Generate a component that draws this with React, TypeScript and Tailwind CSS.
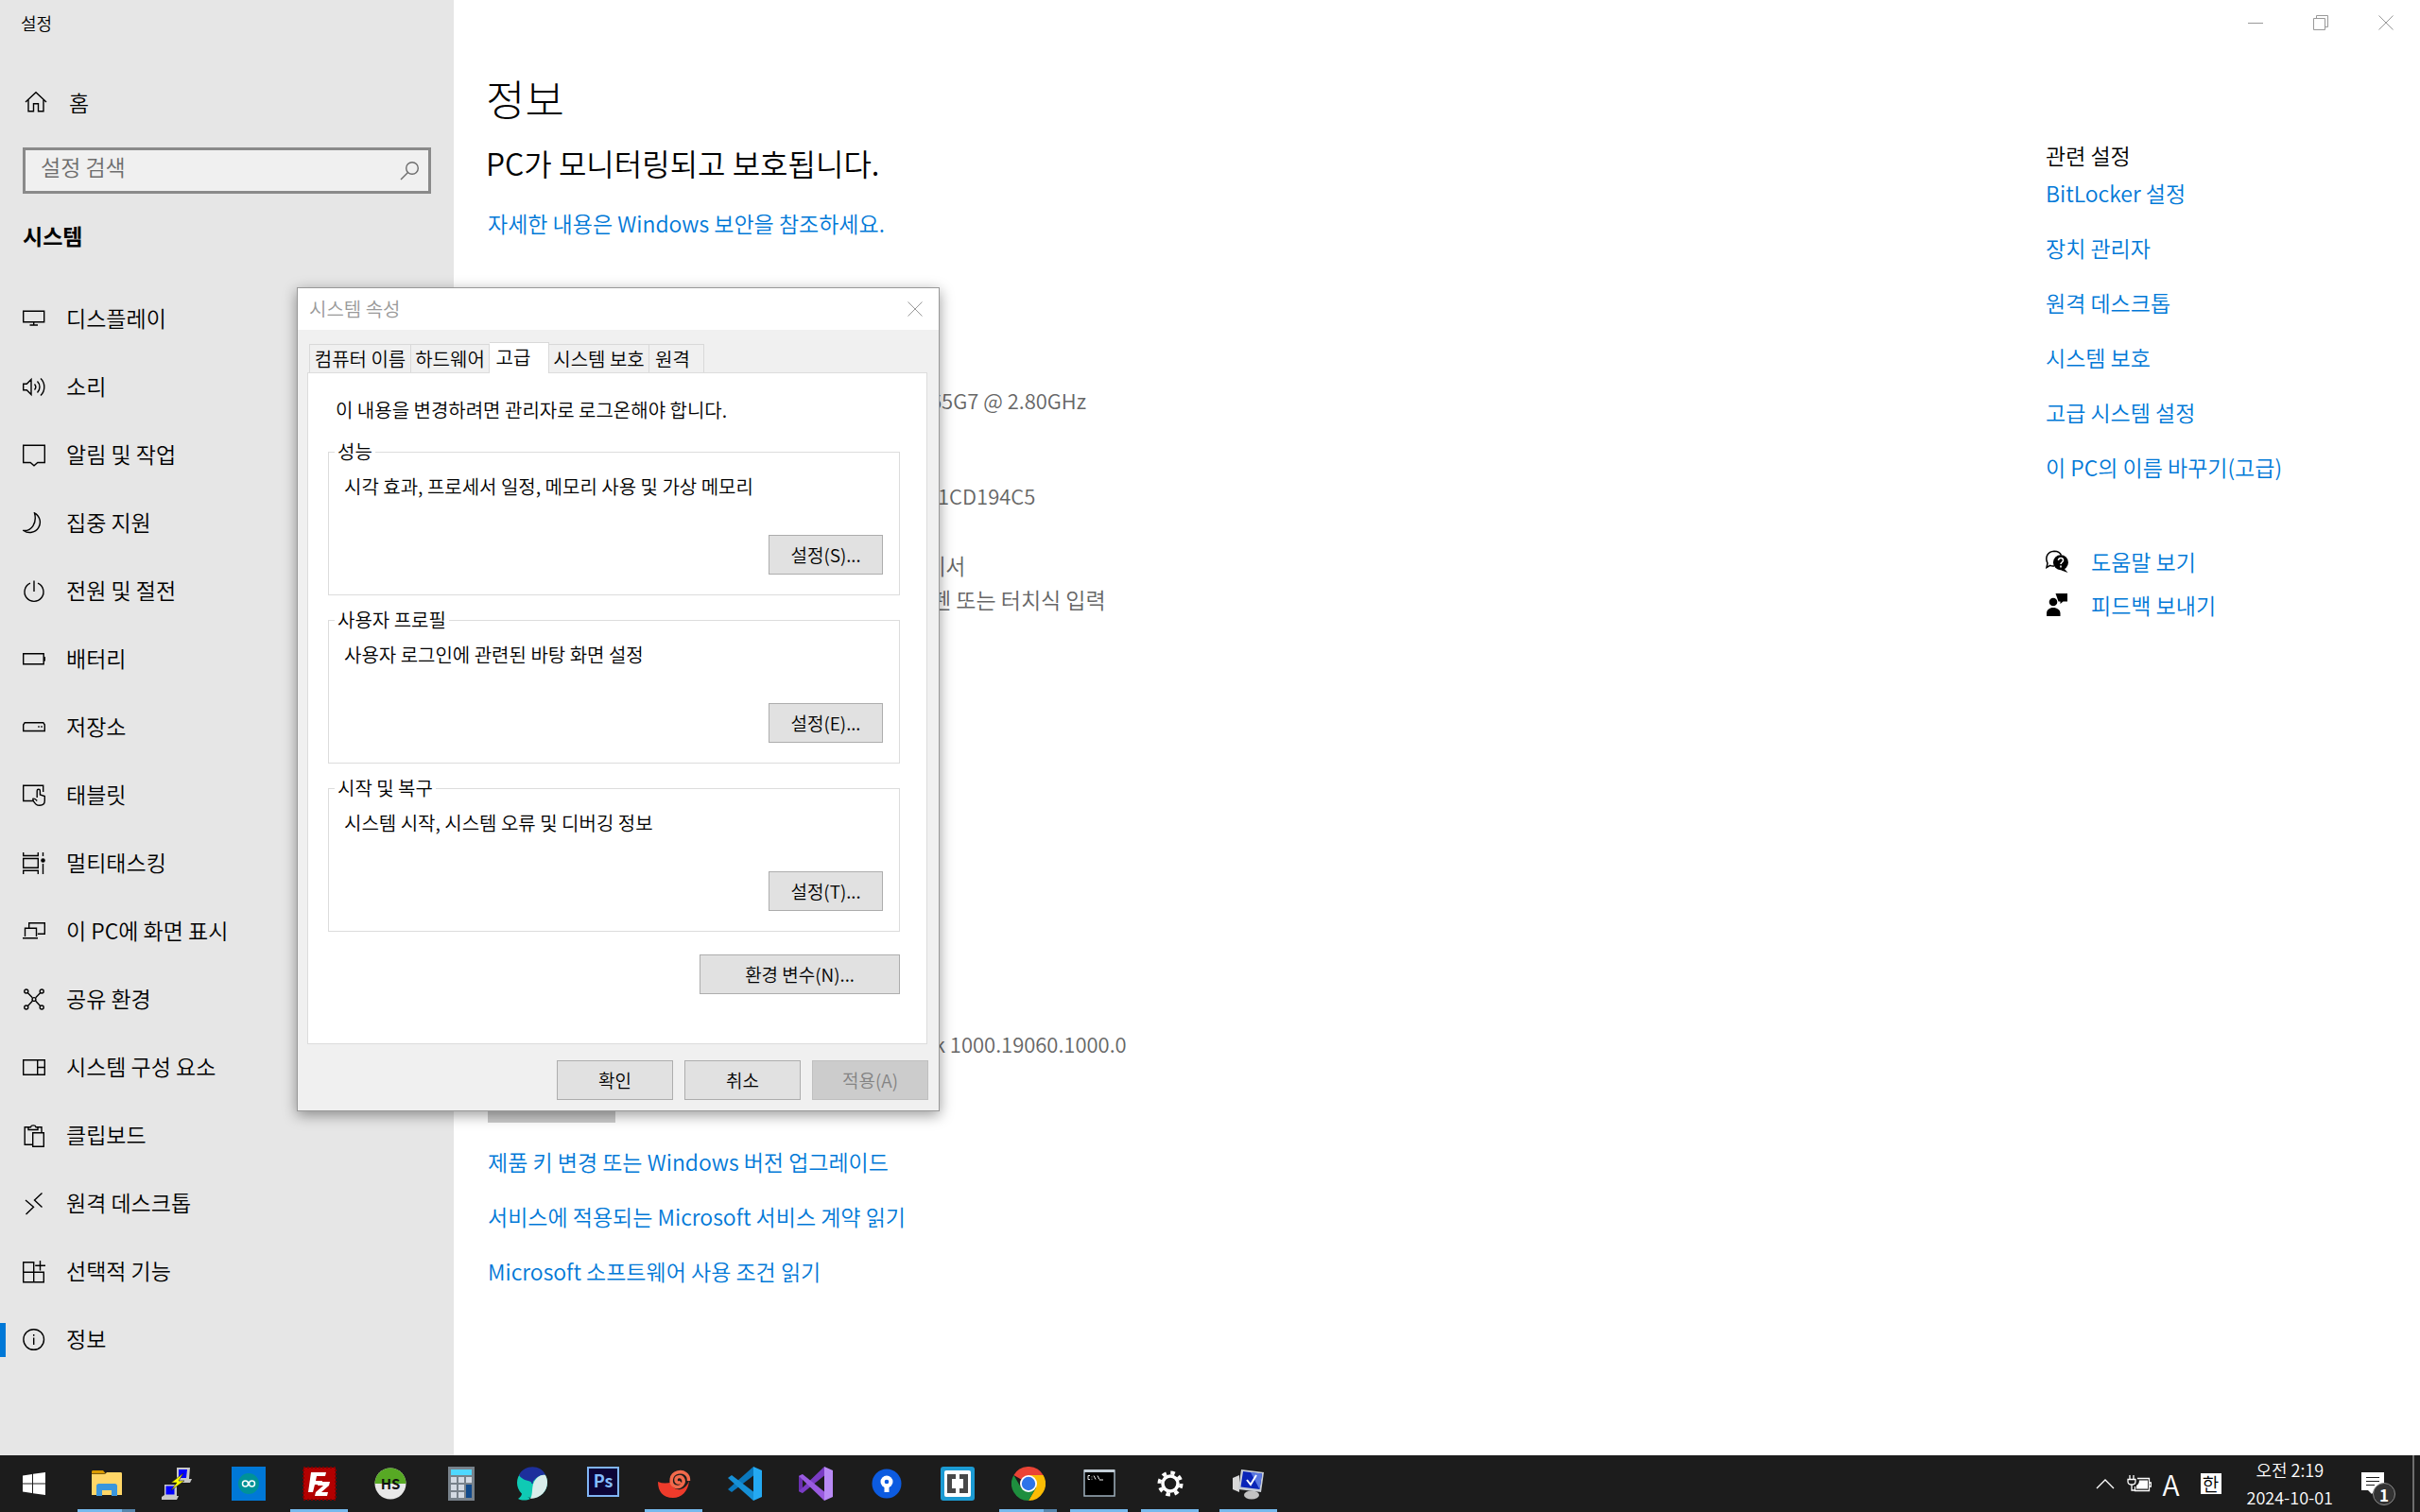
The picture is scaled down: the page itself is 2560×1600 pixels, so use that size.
import type { ReactNode } from "react";

type NavItem = { label: string; icon: ReactNode; active?: boolean };

function LineIcon({ children }: { children: ReactNode }) {
  return (
    <svg viewBox="0 0 24 24" className="h-6 w-6 shrink-0" fill="none" stroke="#000" strokeWidth="1.4">
      {children}
    </svg>
  );
}

const navItems: NavItem[] = [
  {
    label: "디스플레이",
    icon: <path d="M.7 3.2h22v11.6H.7zM11.7 15v3M7.5 18H16" />,
  },
  {
    label: "소리",
    icon: (
      <path d="M.7 8.2h3.6L9 3.4v16.2l-4.7-4.8H.7zM12.5 8.5a4.5 4.5 0 0 1 0 6M15.5 5.5a8.5 8.5 0 0 1 0 12M19 2.5a12.5 12.5 0 0 1 0 18" />
    ),
  },
  {
    label: "알림 및 작업",
    icon: <path d="M.7 1.2h22.6v18.3h-7.5L12 22.8l-3.8-3.3H.7z" />,
  },
  {
    label: "집중 지원",
    icon: <path d="M12.5.8a11 11 0 1 1-11.5 18.7C9 20 15.5 12 12.5.8z" />,
  },
  {
    label: "전원 및 절전",
    icon: <path d="M12 .5V12M8 3.2a10 10 0 1 0 8 0" />,
  },
  {
    label: "배터리",
    icon: <path d="M.7 5.7h21.5v11H.7zM23.3 9v4.5" />,
  },
  {
    label: "저장소",
    icon: <path d="M2.2 6.7h19.6L23.3 9v6.5H.7V9zM16.2 11h1.6M19.2 11h1.6" />,
  },
  {
    label: "태블릿",
    icon: (
      <path d="M11 17.5H.7V1.2h21V8M15.2 14V6.800a1.600 1.600 0 0 1 3.200 0V11l4.900 1.500v4.800c0 3-2 5-5.300 5-3.500 0-4.500-1.500-6.700-4.600l-.5-2.400c1.600-.6 3 .2 4.400 2.200" />
    ),
  },
  {
    label: "멀티태스킹",
    icon: (
      <>
        <path d="M.7 0v3.5h15.6V0M.7 6.5h15.6v9.800H.7zM.7 23v-3.700h15.600V23M21.5 0v4M21.5 12v11" />
        <circle cx="21.5" cy="8.5" r="1.6" fill="#000" />
      </>
    ),
  },
  {
    label: "이 PC에 화면 표시",
    icon: <path d="M6.7 8V2.700h16.600v11.600h-7.500M2.5 17V8.200h12V17M0 18.800h16" />,
  },
  {
    label: "공유 환경",
    icon: (
      <>
        <path d="M5 4.2l5.300 5.500M19 4.200l-5.300 5.500M5 19l5.300-5.700M19 19l-5.300-5.700" />
        <circle cx="12" cy="11.5" r="1.9" />
        <circle cx="3.800" cy="3" r="2" />
        <circle cx="20.200" cy="3" r="2" />
        <circle cx="3.800" cy="20" r="2" />
        <circle cx="20.200" cy="20" r="2" />
      </>
    ),
  },
  {
    label: "시스템 구성 요소",
    icon: <path d="M.7 3.7h22.6v15.6H.7zM15.7 3.7v15.6M15.7 11.5h7.6" />,
  },
  {
    label: "클립보드",
    icon: <path d="M10 21.3H2.2V2.7h3.5M16 2.7h4v6M6 5.5V2.7h2.5c.5-2.500 5-2.500 5.500 0H16v2.800zM10.700 8.700h11.600v14.500H10.700z" />,
  },
  {
    label: "원격 데스크톱",
    icon: <path d="M3 8l8.500 7.300L3.500 23M20.500.5l-8 7.500 8 7.500" />,
  },
  {
    label: "선택적 기능",
    icon: <path d="M.7 1.7h11v21H.7zM.7 12.2h21.600v10.500h-11M18.500 0v10.500M13.200 5.200H24" />,
  },
  {
    label: "정보",
    active: true,
    icon: (
      <>
        <circle cx="11.700" cy="11.500" r="10.800" />
        <path d="M11.700 9.500V17M11.700 6v1.700" />
      </>
    ),
  },
];

const relatedLinks = [
  "BitLocker 설정",
  "장치 관리자",
  "원격 데스크톱",
  "시스템 보호",
  "고급 시스템 설정",
  "이 PC의 이름 바꾸기(고급)",
];

const productLinks = [
  "제품 키 변경 또는 Windows 버전 업그레이드",
  "서비스에 적용되는 Microsoft 서비스 계약 읽기",
  "Microsoft 소프트웨어 사용 조건 읽기",
];

const groups = [
  { title: "성능", text: "시각 효과, 프로세서 일정, 메모리 사용 및 가상 메모리", button: "설정(S)..." },
  { title: "사용자 프로필", text: "사용자 로그인에 관련된 바탕 화면 설정", button: "설정(E)..." },
  { title: "시작 및 복구", text: "시스템 시작, 시스템 오류 및 디버깅 정보", button: "설정(T)..." },
];

function Sidebar() {
  return (
    <aside className="w-[480px] shrink-0 bg-[#e6e6e6]">
      <div className="flex h-12 items-center pl-[22px] text-[18px]">설정</div>

      <button type="button" className="mt-6 flex h-[72px] w-full items-center gap-[23px] pl-[26px]">
        <LineIcon>
          <path d="M1 12L12 1.7 23 12M4 9.800v12h5.500v-8h5v8H20v-12" />
        </LineIcon>
        홈
      </button>

      <div className="mx-6 mt-3 flex h-[49px] items-center border-[3px] border-[#8a8a8a] bg-[#f0f0f0] pr-2">
        <input
          type="text"
          aria-label="설정 검색"
          placeholder="설정 검색"
          className="min-w-0 flex-1 bg-transparent pb-2 pl-4 outline-none placeholder:text-[#6d6d6d]"
        />
        <svg viewBox="0 0 24 24" className="h-6 w-6" fill="none" stroke="#6d6d6d" strokeWidth="1.4">
          <circle cx="15" cy="9" r="6.3" />
          <path d="M10.500 13.500L3 21" />
        </svg>
      </div>

      <h2 className="mt-5 mb-[29px] flex h-12 items-center pl-6 font-bold">시스템</h2>

      <nav>
        {navItems.map((item) => (
          <a key={item.label} href="#" className="flex h-[72px] items-center">
            <span className={item.active ? "h-9 w-1.5 bg-[#0078d7]" : "h-9 w-1.5"} />
            <span className="pr-[22px] pl-[18px]">
              <LineIcon>{item.icon}</LineIcon>
            </span>
            <span className="pb-[3px]">{item.label}</span>
          </a>
        ))}
      </nav>
    </aside>
  );
}

function WindowControls() {
  return (
    <header className="flex h-12 items-center justify-end pr-0.5">
      <button type="button" aria-label="최소화" className="flex h-12 w-[69px] items-center justify-center">
        <svg viewBox="0 0 16 16" className="h-4 w-4" stroke="#999" fill="none">
          <path d="M0 8.500h16" />
        </svg>
      </button>
      <button type="button" aria-label="이전 크기로" className="flex h-12 w-[69px] items-center justify-center">
        <svg viewBox="0 0 16 16" className="h-4 w-4" stroke="#999" fill="none">
          <path d="M.5 3.500h12v12H.5zM3.500 3.500v-3h12v12h-3" />
        </svg>
      </button>
      <button type="button" aria-label="닫기" className="flex h-12 w-[69px] items-center justify-center">
        <svg viewBox="0 0 16 16" className="h-4 w-4" stroke="#999" fill="none">
          <path d="M.5.5l15 15M15.500.5l-15 15" />
        </svg>
      </button>
    </header>
  );
}

function Content() {
  return (
    <div className="min-w-0 flex-1 pl-[34px]">
      <h1 className="mt-[26px] text-[45px] leading-[60px] font-light">정보</h1>
      <h2 className="mt-[15px] text-[32px] leading-[46px]">PC가 모니터링되고 보호됩니다.</h2>

      <div className="pl-0.5">
        <a href="#" className="mt-[23px] block leading-9 text-[#0078d7]">
          자세한 내용은 Windows 보안을 참조하세요.
        </a>

        <div className="mt-[151px] leading-9 text-[#666]">
          <p className="pl-[468px] text-[22px]">65G7 @ 2.80GHz</p>
          <p className="mt-[65px] pl-[476px] text-[22px]">1CD194C5</p>
          <p className="mt-[38px] pl-[463px]">세서</p>
          <p className="pl-[469px]">펜 또는 터치식 입력</p>
          <p className="mt-[434px] pl-[472px] text-[22px]">k 1000.19060.1000.0</p>
        </div>

        <button type="button" className="mt-[13px] block h-[53px] w-[135px] bg-[#ccc]">
          복사
        </button>

        <ul className="mt-[23px] flex flex-col gap-[22px] leading-9 text-[#0078d7]">
          {productLinks.map((label) => (
            <li key={label}>
              <a href="#">{label}</a>
            </li>
          ))}
        </ul>
      </div>
    </div>
  );
}

function Related() {
  return (
    <aside className="w-[396px] shrink-0 pt-[98px] leading-9">
      <h3>관련 설정</h3>
      <ul className="mt-1 flex flex-col gap-[22px] text-[#0078d7]">
        {relatedLinks.map((label) => (
          <li key={label}>
            <a href="#">{label}</a>
          </li>
        ))}
      </ul>

      <div className="mt-16 flex flex-col gap-[10px] text-[#0078d7]">
        <a href="#" className="flex items-center gap-6">
          <svg viewBox="0 0 24 24" className="h-6 w-6">
            <path
              d="M9 17c-2 .3-3.200 0-4.200-.6L1 18.500l1-4.500C-1 8 2 1.500 9 1.200c4 0 6.500 1.800 7.500 4.300"
              fill="none"
              stroke="#000"
              strokeWidth="1.5"
            />
            <path d="M16 5.200a8 8 0 1 1-.1 16 8 8 0 0 1 .1-16zM19 19l4.500 5-7-2.500z" fill="#000" />
            <path d="M13.500 11c0-3.500 5.200-3.200 5 0 0 2-2.500 2-2.500 4M16 16.500v2" fill="none" stroke="#fff" strokeWidth="1.6" />
          </svg>
          도움말 보기
        </a>
        <a href="#" className="flex items-center gap-6">
          <svg viewBox="0 0 24 24" className="h-6 w-6">
            <path d="M10.500 0H23v8.500h-4.500L15.500 11V8.500h-2z" />
            <circle cx="8" cy="9" r="4.3" />
            <path d="M1 24v-3c0-3.500 3-6 7-6s7.500 2.500 7.500 6v3z" />
          </svg>
          피드백 보내기
        </a>
      </div>
    </aside>
  );
}

function DialogButton({ label, size, disabled }: { label: string; size: string; disabled?: boolean }) {
  return (
    <button
      type="button"
      disabled={disabled}
      className={`h-[42px] border border-[#adadad] bg-[#e1e1e1] text-[19px] disabled:border-[#bfbfbf] disabled:bg-[#ccc] disabled:text-[#838383] ${size}`}
    >
      {label}
    </button>
  );
}

function SystemProperties() {
  const tab = "h-[30px] border-t border-r border-[#d9d9d9]";

  return (
    <div
      role="dialog"
      aria-label="시스템 속성"
      className="absolute top-[304px] left-[314px] w-[680px] border border-[#999] bg-[#f0f0f0] text-[20px] leading-6 shadow-[0_4px_14px_rgba(0,0,0,0.4)]"
    >
      <div className="flex h-11 items-center justify-between bg-white pr-[17px] pl-3 text-[#999]">
        시스템 속성
        <button type="button" aria-label="닫기">
          <svg viewBox="0 0 16 16" className="h-4 w-4" stroke="#999" fill="none">
            <path d="M.5.5l15 15M15.500.5l-15 15" />
          </svg>
        </button>
      </div>

      <div className="pr-3 pb-[11px] pl-[10px]">
        <div role="tablist" className="mt-[13px] flex items-end pl-0.5">
          <button type="button" role="tab" className={`w-[108px] border-l ${tab}`}>
            컴퓨터 이름
          </button>
          <button type="button" role="tab" className={`w-[83px] ${tab}`}>
            하드웨어
          </button>
          <button
            type="button"
            role="tab"
            aria-selected="true"
            className="-mb-px h-[33px] w-[63px] border-t border-r border-[#d9d9d9] bg-white pr-3 pb-0.5"
          >
            고급
          </button>
          <button type="button" role="tab" className={`w-[106px] ${tab}`}>
            시스템 보호
          </button>
          <button type="button" role="tab" className={`w-[58px] pr-2 ${tab}`}>
            원격
          </button>
        </div>

        <div role="tabpanel" className="border border-[#dcdcdc] bg-white pt-[27px] pr-7 pb-[52px] pl-[21px]">
          <p className="pl-2">이 내용을 변경하려면 관리자로 로그온해야 합니다.</p>

          <div className="mt-5 flex flex-col gap-[14px]">
            {groups.map((group) => (
              <fieldset key={group.title} className="border border-[#dcdcdc]">
                <legend className="ml-1.5 px-[3px]">{group.title}</legend>
                <p className="mt-[13px] pl-4">{group.text}</p>
                <div className="mt-[39px] mr-[17px] mb-[21px] flex justify-end">
                  <DialogButton label={group.button} size="w-[121px]" />
                </div>
              </fieldset>
            ))}
          </div>

          <div className="mt-6 flex justify-end">
            <DialogButton label="환경 변수(N)..." size="w-[212px]" />
          </div>
        </div>

        <div className="-mr-px mt-[17px] flex justify-end gap-3">
          <DialogButton label="확인" size="w-[123px]" />
          <DialogButton label="취소" size="w-[123px]" />
          <DialogButton label="적용(A)" size="w-[123px]" disabled />
        </div>
      </div>
    </div>
  );
}

type TaskbarApp = { name: string; running?: boolean; stacked?: boolean; spaced?: boolean; art: ReactNode };

const apps: TaskbarApp[] = [
  {
    name: "파일 탐색기",
    running: true,
    stacked: true,
    art: (
      <>
        <path d="M2 5.500c0-1 .5-1.500 1.500-1.500H14l3 3.500H2z" fill="#d99a00" />
        <path d="M2 8h14l2-2h14.500c1 0 1.500.5 1.500 1.500V30H2z" fill="#ffd667" />
        <path d="M7 31V20.500C7 19 8 18 9.500 18h17c1.500 0 2.500 1 2.500 2.500V31h-6v-6H13v6z" fill="#3a96dd" />
      </>
    ),
  },
  {
    name: "PuTTY",
    art: (
      <>
        <path d="M17 1h14l-1 12h3l-2 4H16l-1-3h2z" fill="#c8c8c8" />
        <path d="M19 3h9l-1 9h-8z" fill="#00f" />
        <path d="M4 19h13v12h2l-2 4H1v-3l3-2z" fill="#c8c8c8" />
        <path d="M5.500 20.500h9v9h-9z" fill="#00f" />
        <path d="M24 7L11 17h6l-6 8 14-10h-6z" fill="#ff0" stroke="#222" strokeWidth=".6" />
      </>
    ),
  },
  {
    name: "Arduino",
    art: (
      <>
        <path d="M0 0h36v36H0z" fill="#0078d7" />
        <circle cx="18" cy="18" r="11" fill="#009298" />
        <circle cx="14.500" cy="18" r="3" fill="none" stroke="#fff" strokeWidth="1.5" />
        <circle cx="21.500" cy="18" r="3" fill="none" stroke="#fff" strokeWidth="1.5" />
      </>
    ),
  },
  {
    name: "FileZilla",
    running: true,
    art: (
      <>
        <path d="M1 1h34v34H1z" fill="#b30000" stroke="#7d0000" strokeWidth="2" strokeDasharray="2 2" />
        <path d="M9 6h16l-1 4h-9l-1 5h7l-1 4h-7l-2 8H6z" fill="#fff" />
        <path d="M17 16h12l-1 4-8 7h7l-1 4H13l1-4 8-7h-6z" fill="#fff" />
      </>
    ),
  },
  {
    name: "HeidiSQL",
    art: (
      <>
        <circle cx="18" cy="18" r="16.500" fill="#e8e8e8" />
        <path d="M1.500 18a16.500 16.500 0 0 1 33 0z" fill="#57a924" />
        <text x="18" y="23.500" textAnchor="middle" fontSize="15" fontWeight="700" fill="#111">
          HS
        </text>
      </>
    ),
  },
  {
    name: "계산기",
    art: (
      <>
        <path d="M4 0h28v36H4z" fill="#78828b" />
        <path d="M7 3h22v6H7z" fill="#4fd8ff" />
        <path
          d="M7 11h6v6H7zM15 11h6v6h-6zM23 11h6v6h-6zM7 19h6v6H7zM15 19h6v6h-6zM7 27h6v6H7zM15 27h6v6h-6z"
          fill="#d3dae3"
        />
        <path d="M23 19h6v14h-6z" fill="#114a8b" />
      </>
    ),
  },
  {
    name: "Whale",
    art: (
      <>
        <circle cx="18" cy="17" r="16" fill="#0fcab4" />
        <path d="M4 9C9-2 27-3 32 9c-6-1-10 3-14 8C14 14 8 15 4 9z" fill="#1d2f9c" />
        <path d="M32 9c6 11-2 25-16 25 3-5 1-12 4-18 3-5 7-8 12-7z" fill="#d9ecea" />
        <path d="M3 22c3 5 8 8 13 12-4 2-9 2-13 0 3-2 4-4 4-6z" fill="#0fcab4" />
        <circle cx="18" cy="17" r="1" fill="#1d2f9c" />
      </>
    ),
  },
  {
    name: "Photoshop",
    art: (
      <>
        <path d="M2 1h32v30H2z" fill="#0c0538" stroke="#80b5f5" strokeWidth="2" />
        <text x="18" y="22" textAnchor="middle" fontSize="18" fontWeight="700" fill="#84bdff">
          Ps
        </text>
      </>
    ),
  },
  {
    name: "Nautilus",
    running: true,
    art: (
      <>
        <path d="M1 16c5 2 10 2 15 0-1 6 4 9 9 8 4-1 7-4 9-9-1 11-8 18-17 18C6 33 1 26 1 16z" fill="#ee3b2b" />
        <path
          d="M33.500 15C34 8 28 4.500 22 6c-8 2-9 12-3 15 6 2 10-3 9-7-2-5-8-4-8 0 0 3 3 4 5 2"
          fill="none"
          stroke="#f2694b"
          strokeWidth="3.5"
        />
      </>
    ),
  },
  {
    name: "Visual Studio Code",
    art: (
      <>
        <path d="M27 0l9 4v28l-9 4z" fill="#24a9f2" />
        <path d="M27 9.500L4 27 0 24 27 0z" fill="#0a78bd" />
        <path d="M27 26.500L4 9 0 12l27 24z" fill="#1690d6" />
      </>
    ),
  },
  {
    name: "Visual Studio",
    art: (
      <>
        <path d="M27 0l9 4v28l-9 4z" fill="#b98af5" />
        <path d="M0 10l4-2v20l-4-2z" fill="#6a2fb0" />
        <path d="M27 9.500L4 28l-4-2L27 0z" fill="#7a3cc4" />
        <path d="M27 26.500L4 8l-4 2 27 26z" fill="#9a5be0" />
      </>
    ),
  },
  {
    name: "Sourcetree",
    art: (
      <>
        <circle cx="18" cy="18" r="15.500" fill="#0c5be0" />
        <circle cx="18" cy="16" r="6.500" fill="#fff" />
        <path d="M15.500 20h5v7h-5z" fill="#fff" />
        <circle cx="18" cy="16" r="2.300" fill="#0c5be0" />
      </>
    ),
  },
  {
    name: "Brackets",
    art: (
      <>
        <rect width="36" height="36" rx="3" fill="#1c9bd3" />
        <rect x="4" y="4" width="28" height="28" rx="2" fill="#fff" />
        <path d="M7 8h9v5h-4v10h4v5H7zM29 8h-9v5h4v10h-4v5h9z" fill="#484848" />
      </>
    ),
  },
  {
    name: "Chrome",
    running: true,
    stacked: true,
    art: (
      <>
        <path d="M18 18L2.400 9A18 18 0 0 1 33.600 9z" fill="#ea4335" />
        <path d="M18 9h15.600A18 18 0 0 1 18 36l7.800-13.500z" fill="#fbbc04" />
        <path d="M2.400 9A18 18 0 0 0 18 36l7.800-13.500H10.200z" fill="#1e8e3e" />
        <circle cx="18" cy="18" r="9" fill="#fff" />
        <circle cx="18" cy="18" r="7.200" fill="#2d74ea" />
      </>
    ),
  },
  {
    name: "명령 프롬프트",
    running: true,
    art: (
      <>
        <path d="M2 4h32v27H2z" fill="#000" stroke="#9fb0bd" strokeWidth="1.5" />
        <path d="M2 3h32v3H2z" fill="#c3ced7" />
        <path d="M8 9.500H6v4h2M10 10.500v.8M10 12.800v.8M12 9.500l2 4M16 9.500l2 4M18 14h4" fill="none" stroke="#eee" />
      </>
    ),
  },
  {
    name: "설정",
    running: true,
    art: (
      <>
        <circle cx="18" cy="18" r="8" fill="none" stroke="#fff" strokeWidth="3.5" />
        <circle cx="18" cy="18" r="11.500" fill="none" stroke="#fff" strokeWidth="4" strokeDasharray="4.5 4.53" />
      </>
    ),
  },
  {
    name: "시스템 속성",
    running: true,
    spaced: true,
    art: (
      <>
        <path d="M1 12l7-3v18l-7-3z" fill="#d8d8d8" />
        <path d="M10 3l24 3-3 21-24-3z" fill="#c9ced6" />
        <path d="M12 5l20 2.500L29.500 24l-20-2.500z" fill="#0b25b8" />
        <path d="M20 6l12 1.500L29.500 24z" fill="#5a78e0" />
        <path d="M16 14l4 5 6-10" fill="none" stroke="#fff" strokeWidth="2" />
        <ellipse cx="21" cy="30" rx="8" ry="4.500" fill="#c2c2c2" />
      </>
    ),
  },
];

function Taskbar() {
  return (
    <footer className="flex h-[60px] shrink-0 bg-[#1c1c1c] text-white">
      <button type="button" aria-label="시작" className="mr-[10px] flex w-[72px] items-center justify-center">
        <svg viewBox="0 0 24 24" className="h-6 w-6" fill="#fff">
          <path d="M0 3.500L10 2v9.500H0zM11 1.800L24 0v11.500H11zM0 12.500h10V22L0 20.500zM11 12.500h13V24l-13-1.800z" />
        </svg>
      </button>

      <div className="flex gap-[14px]">
        {apps.map((app) => (
          <button
            key={app.name}
            type="button"
            aria-label={app.name}
            className={`flex w-[61px] flex-col items-center pt-3 ${app.spaced ? "ml-2" : ""}`}
          >
            <svg viewBox="0 0 36 36" className="h-9 w-9">
              {app.art}
            </svg>
            {app.running && (
              <span className="mt-auto flex h-[3px] w-full bg-[#76b9ed]">
                {app.stacked && <span className="ml-auto w-[14px] bg-[#5585ab]" />}
              </span>
            )}
          </button>
        ))}
      </div>

      <div className="ml-auto flex items-center">
        <svg viewBox="0 0 20 12" className="mr-[13px] h-3 w-5" fill="none" stroke="#fff" strokeWidth="1.3">
          <path d="M1 11l9-9 9 9" />
        </svg>
        <svg viewBox="0 0 26 20" className="mr-3 h-5 w-[26px]" fill="none" stroke="#fff" strokeWidth="1.3">
          <path d="M3 1v4M7 1v4M1 5.500h8V8c0 2-1.500 3-4 3S1 10 1 8zM5 11v6h4M11 4.500h12.500v13H8.500V13M24 9h1.500v4H24" />
          <path d="M13 6.500h9v9H10V12c2-1 3-3 3-5.500z" fill="#fff" stroke="none" />
        </svg>
        <span className="mr-[22px] text-[30px] leading-8">A</span>
        <span className="mr-[27px] flex h-[22px] w-[22px] items-center justify-center bg-white text-[19px] leading-[22px] text-black">
          한
        </span>
        <div className="mr-[30px] text-center text-[18px] leading-[29px]">
          <p>오전 2:19</p>
          <p>2024-10-01</p>
        </div>
        <button type="button" aria-label="알림 1개" className="relative mr-[30px] h-6 w-6">
          <svg viewBox="0 0 24 24" className="h-6 w-6">
            <path d="M0 0h24v19H14l-3 4-4-4H0z" fill="#fff" />
            <path d="M5 5.500h14M5 9.500h14M5 13.500h9" stroke="#1c1c1c" strokeWidth="1.2" />
          </svg>
          <span className="absolute top-[11px] left-3 flex h-6 w-6 items-center justify-center rounded-full border border-[#8a8a8a] bg-[#333] text-[17px] leading-none font-bold">
            1
          </span>
        </button>
        <span className="mr-1.5 h-[60px] w-0.5 bg-[#6e6e6e]" />
      </div>
    </footer>
  );
}

export default function App() {
  return (
    <div className="relative flex min-h-screen flex-col bg-white font-['Noto_Sans_CJK_KR',sans-serif] text-[23px] font-[350] text-black">
      <div className="flex flex-1">
        <Sidebar />
        <main className="flex min-w-0 flex-1 flex-col">
          <WindowControls />
          <div className="flex">
            <Content />
            <Related />
          </div>
        </main>
      </div>
      <Taskbar />
      <SystemProperties />
    </div>
  );
}
